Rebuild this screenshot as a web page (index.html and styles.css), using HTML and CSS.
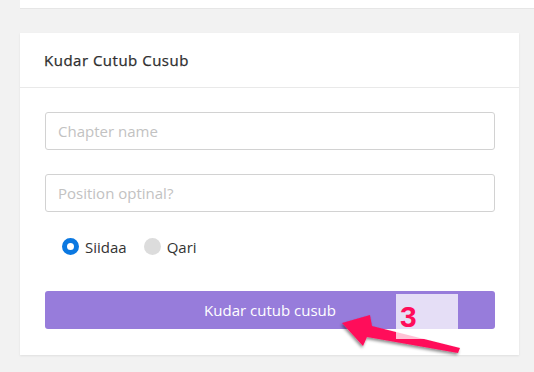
FILE: index.html
```html
<!DOCTYPE html>
<html>
<head>
<meta charset="utf-8">
<link rel="stylesheet" href="styles.css">
</head>
<body>
<div class="top-card"></div>
<div class="card">
  <div class="card-header">Kudar Cutub Cusub</div>
  <div class="card-body">
    <input class="field" type="text" placeholder="Chapter name">
    <input class="field field-second" type="text" placeholder="Position optinal?">
    <div class="radios">
      <label class="radio"><span class="dot dot-on"></span><span class="radio-label">Siidaa</span></label>
      <label class="radio"><span class="dot"></span><span class="radio-label">Qari</span></label>
    </div>
    <button class="btn">Kudar cutub cusub</button>
  </div>
</div>
<svg class="annot" width="534" height="372" viewBox="0 0 534 372">
  <defs>
    <filter id="sh" x="-20%" y="-50%" width="140%" height="200%">
      <feDropShadow dx="-1" dy="2" stdDeviation="1.5" flood-color="#000" flood-opacity="0.45"/>
    </filter>
  </defs>
  <polygon filter="url(#sh)" fill="#ff0c5a" points="342,323 370,315 372,326 460,348 458,353 367,337 363,346"/>
  <rect x="396" y="294" width="62" height="45" fill="#ffffff" fill-opacity="0.75"/>
  <text x="400" y="327" class="num">3</text>
</svg>
</body>
</html>
```

FILE: styles.css
```css
html, body {
  margin: 0;
  padding: 0;
}
body {
  background: #f2f2f2;
  font-family: "Open Sans", "Liberation Sans", sans-serif;
  position: relative;
  width: 534px;
  height: 372px;
  overflow: hidden;
}
.top-card {
  margin-left: 20px;
  height: 8px;
  background: #fff;
  border-bottom: 1px solid #e6e6e6;
}
.card {
  margin: 24px 15px 0 20px;
  background: #fff;
  box-shadow: 0 1px 2px rgba(0,0,0,0.08);
}
.card-header {
  height: 55px;
  box-sizing: border-box;
  padding: 0 24px;
  display: flex;
  align-items: center;
  font-size: 15px;
  font-weight: 500;
  letter-spacing: 0.5px;
  color: #2e2e2e;
  -webkit-text-stroke: 0.25px #2e2e2e;
  border-bottom: 1px solid #e9e9e9;
}
.card-body {
  padding: 24px 24px 26px 25px;
  display: flex;
  flex-direction: column;
}
.field {
  display: block;
  box-sizing: border-box;
  width: 450px;
  height: 38px;
  margin: 0;
  padding: 0 12px;
  border: 1px solid #d2d2d2;
  border-radius: 3px;
  font-family: inherit;
  font-size: 15px;
  color: #333;
  outline: none;
}
.field::placeholder {
  color: #c2c2c2;
}
.field-second {
  margin-top: 24px;
}
.radios {
  margin-top: 24px;
  height: 21px;
  display: flex;
  align-items: center;
  padding-left: 17px;
  gap: 17px;
}
.radio {
  display: flex;
  align-items: center;
  gap: 6px;
  font-size: 15px;
  color: #333;
}
.dot {
  width: 17px;
  height: 17px;
  border-radius: 50%;
  background: #dcdcdc;
  box-sizing: border-box;
}
.dot-on {
  background: #fff;
  border: 5px solid #0b78e1;
}
.btn {
  margin-top: 34px;
  width: 450px;
  height: 38px;
  border: none;
  border-radius: 3px;
  background: #977cdb;
  color: #fff;
  font-family: inherit;
  font-size: 15px;
  padding: 0;
}
.annot {
  position: absolute;
  left: 0;
  top: 0;
  pointer-events: none;
}
.num {
  font-family: "Liberation Sans", Arial, sans-serif;
  font-weight: bold;
  font-size: 30px;
  fill: #ff0c5a;
}
```
